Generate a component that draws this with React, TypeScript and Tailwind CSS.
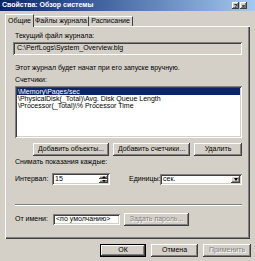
const raised =
  "shadow-[inset_-1px_-1px_0_#404040,inset_1px_1px_0_#ffffff,inset_-2px_-2px_0_#808080]";
const sunken =
  "shadow-[inset_1px_1px_0_#808080,inset_-1px_-1px_0_#ffffff,inset_2px_2px_0_#404040,inset_-2px_-2px_0_#d4d0c8]";

function Button({
  label,
  width,
  disabled,
  isDefault,
}: {
  label: string;
  width: string;
  disabled?: boolean;
  isDefault?: boolean;
}) {
  return (
    <div
      className={`flex h-[13px] shrink-0 items-center justify-center bg-[#d4d0c8] ${width} ${
        isDefault ? "border border-black" : ""
      }`}
    >
      <div className={`flex h-full w-full items-center justify-center ${raised}`}>
        <span
          className={
            disabled
              ? "text-[#808080] [text-shadow:1px_1px_0_#ffffff]"
              : "text-black"
          }
        >
          {label}
        </span>
      </div>
    </div>
  );
}

function Label({ children, className = "" }: { children: string; className?: string }) {
  return <div className={`h-[8px] leading-[8px] ${className}`}>{children}</div>;
}

const counters = [
  "\\Memory\\Pages/sec",
  "\\PhysicalDisk(_Total)\\Avg. Disk Queue Length",
  "\\Processor(_Total)\\% Processor Time",
];

export default function App() {
  return (
    <div className="flex h-[261px] w-[255px] flex-col overflow-hidden bg-[#d4d0c8] font-['Liberation_Sans',Arial,sans-serif] text-[7px] text-black">
      {/* title bar */}
      <div className="flex h-[11px] shrink-0 items-center bg-linear-to-r from-[#0a246a] to-[#a6caf0] pl-[2px] pr-[8px]">
        <span className="font-bold text-white">Свойства: Обзор системы</span>
        <div className="ml-auto flex gap-[1px]">
          <div className={`flex h-[7px] w-[7px] items-center justify-center bg-[#d4d0c8] text-[6px] font-bold leading-none ${raised}`}>
            ?
          </div>
          <div className={`flex h-[7px] w-[7px] items-center justify-center bg-[#d4d0c8] text-[6px] font-bold leading-none ${raised}`}>
            ×
          </div>
        </div>
      </div>

      {/* tabs */}
      <div className="mt-[3px] ml-[5px] flex h-[12px] shrink-0 items-end">
        <div className="relative z-10 -mb-[1px] flex h-[13px] w-[29px] items-center justify-center border-t border-l border-white border-r border-r-[#404040] bg-[#d4d0c8]">
          Общие
        </div>
        <div className="flex h-[10px] w-[55px] items-center justify-center border-t border-white border-r border-r-[#404040]">
          Файлы журнала
        </div>
        <div className="flex h-[10px] w-[44px] items-center justify-center border-t border-white border-r border-r-[#404040]">
          Расписание
        </div>
      </div>

      {/* panel */}
      <div className="mx-[5px] flex h-[213px] w-[245px] shrink-0 flex-col px-[8px] shadow-[inset_1px_1px_0_#ffffff,inset_-1px_-1px_0_#404040,inset_-2px_-2px_0_#808080]">
        <Label className="mt-[6px] ml-[2px]">Текущий файл журнала:</Label>
        <div className={`mt-[2px] flex h-[13px] items-center bg-[#d4d0c8] pl-[4px] ${sunken}`}>
          C:\PerfLogs\System_Overview.blg
        </div>

        <Label className="mt-[9px] ml-[2px]">Этот журнал будет начат при его запуске вручную.</Label>
        <Label className="mt-[4px] ml-[2px]">Счетчики:</Label>

        <div className={`mt-[2px] ml-[2px] flex h-[52px] flex-col overflow-hidden bg-white p-[2px] ${sunken}`}>
          {counters.map((c, i) => (
            <div
              key={c}
              className={`h-[7px] shrink-0 whitespace-nowrap pl-[1px] leading-[7px] ${
                i === 0 ? "bg-[#0a246a] text-white" : ""
              }`}
            >
              {c}
            </div>
          ))}
        </div>

        <div className="mt-[5px] flex justify-end gap-[4px]">
          <Button label="Добавить объекты..." width="w-[76px]" />
          <Button label="Добавить счетчики..." width="w-[77px]" />
          <Button label="Удалить" width="w-[48px]" />
        </div>

        <Label className="mt-[2px] ml-[2px]">Снимать показания каждые:</Label>

        <div className="mt-[7px] ml-[2px] flex h-[12px] items-center">
          <span className="w-[37px] shrink-0">Интервал:</span>
          <div className={`flex h-[12px] w-[58px] shrink-0 items-center bg-white pl-[3px] ${sunken}`}>
            <span>15</span>
            <div className="mr-[2px] ml-auto flex h-[8px] w-[9px] flex-col">
              <div className={`flex h-[4px] items-center justify-center bg-[#d4d0c8] ${raised}`}>
                <div className="h-0 w-0 border-x-[2px] border-b-[2px] border-x-transparent border-b-black" />
              </div>
              <div className={`flex h-[4px] items-center justify-center bg-[#d4d0c8] ${raised}`}>
                <div className="h-0 w-0 border-x-[2px] border-t-[2px] border-x-transparent border-t-black" />
              </div>
            </div>
          </div>
          <span className="ml-[19px] w-[31px] shrink-0">Единицы:</span>
          <div className={`flex h-[11px] w-[82px] shrink-0 items-center bg-white pl-[3px] ${sunken}`}>
            <span>сек.</span>
            <div className={`mr-[2px] ml-auto flex h-[7px] w-[9px] items-center justify-center bg-[#d4d0c8] ${raised}`}>
              <div className="h-0 w-0 border-x-[2px] border-t-[3px] border-x-transparent border-t-black" />
            </div>
          </div>
        </div>

        <div className="mt-[19px] ml-[2px] h-[2px] border-t border-t-[#808080] border-b border-b-white" />

        <div className="mt-[7px] ml-[2px] flex h-[13px] items-center">
          <span className="w-[38px] shrink-0">От имени:</span>
          <div className={`flex h-[11px] w-[67px] shrink-0 items-center bg-white pl-[3px] ${sunken}`}>
            &lt;по умолчанию&gt;
          </div>
          <div className="ml-[4px]">
            <Button label="Задать пароль..." width="w-[65px]" disabled />
          </div>
        </div>
      </div>

      {/* dialog buttons */}
      <div className="mt-[5px] flex justify-end pr-[4px]">
        <Button label="ОК" width="w-[46px]" isDefault />
        <div className="w-[5px]" />
        <Button label="Отмена" width="w-[47px]" />
        <div className="w-[5px]" />
        <Button label="Применить" width="w-[48px]" disabled />
      </div>
    </div>
  );
}
